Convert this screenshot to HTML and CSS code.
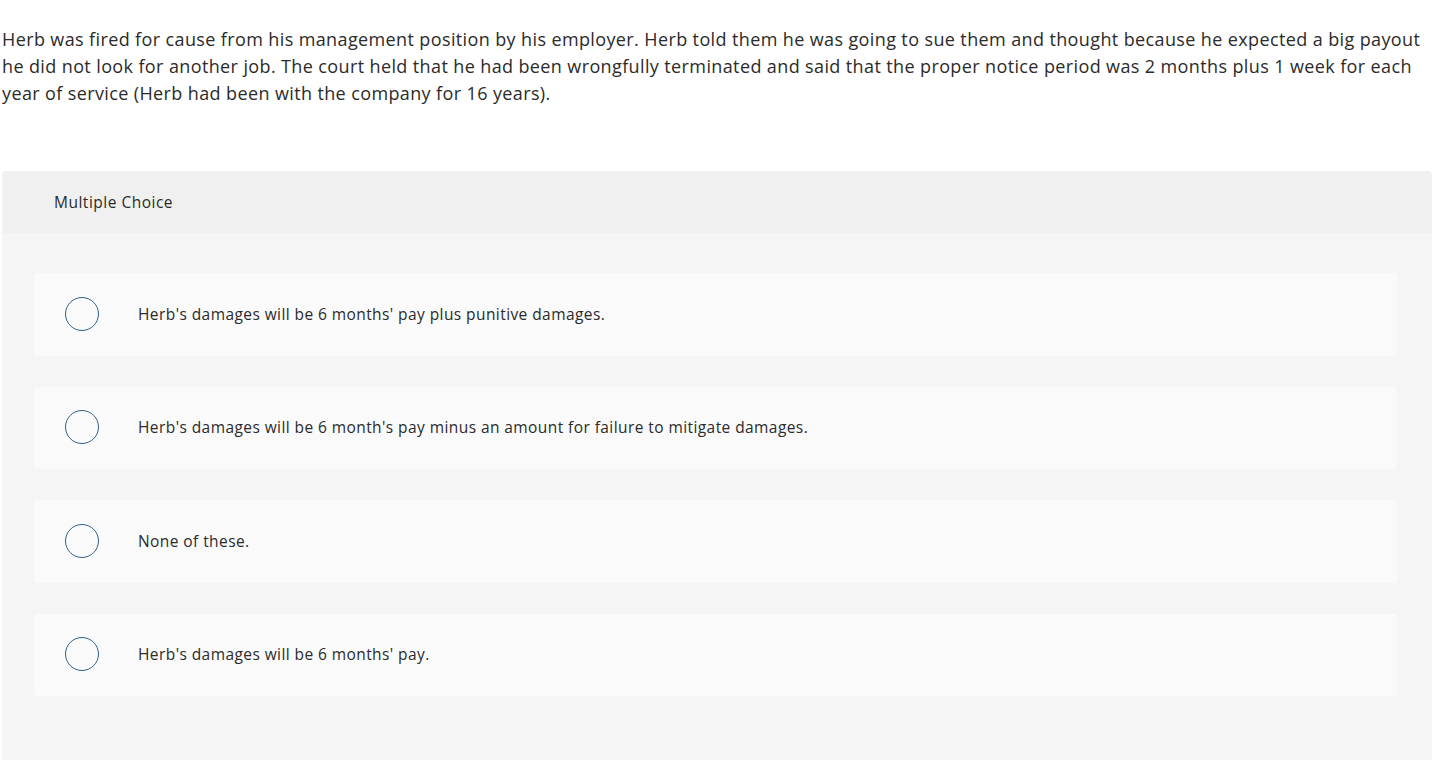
FILE: index.html
```html
<!DOCTYPE html>
<html>
<head>
<meta charset="utf-8">
<link rel="stylesheet" href="styles.css">
</head>
<body>
<div class="page">
  <p class="question">Herb was fired for cause from his management position by his employer. Herb told them he was going to sue them and thought because he expected a big payout he did not look for another job. The court held that he had been wrongfully terminated and said that the proper notice period was 2 months plus 1 week for each year of service (Herb had been with the company for 16 years).</p>
  <div class="card">
    <div class="card-head">Multiple Choice</div>
    <div class="card-body">
      <div class="option"><span class="radio"></span><span class="label">Herb's damages will be 6 months' pay plus punitive damages.</span></div>
      <div class="option"><span class="radio"></span><span class="label">Herb's damages will be 6 month's pay minus an amount for failure to mitigate damages.</span></div>
      <div class="option"><span class="radio"></span><span class="label">None of these.</span></div>
      <div class="option"><span class="radio"></span><span class="label">Herb's damages will be 6 months' pay.</span></div>
    </div>
  </div>
</div>
</body>
</html>
```
FILE: styles.css
```css
html, body { margin: 0; padding: 0; background: #fff; }
body { font-family: "Open Sans", "Noto Sans", sans-serif; color: #2b2b2b; }
.page { padding: 0 5px 0 2px; }
.question { margin: 0; padding-top: 26px; font-size: 18px; line-height: 27px; letter-spacing: 0.38px; }
.card { margin-top: 64px; background: #f5f5f5; border-radius: 4px 4px 0 0; height: 620px; }
.card-head { background: #f0f0f0; height: 62px; display: flex; align-items: center; padding-left: 52px; font-size: 15.5px; letter-spacing: 0.5px; border-radius: 4px 4px 0 0; }
.card-body { padding: 40px 35px 0 32px; display: flex; flex-direction: column; gap: 31px; }
.option { background: #fafafa; border-radius: 4px; height: 82.5px; display: flex; align-items: center; padding-left: 32px; padding-bottom: 1px; box-sizing: border-box; }
.radio { width: 34px; height: 34px; border: 1.5px solid #2f5f8a; border-radius: 50%; box-sizing: border-box; flex: none; margin-left: -1px; }
.label { margin-left: 39px; font-size: 15.5px; letter-spacing: 0.42px; }
```
